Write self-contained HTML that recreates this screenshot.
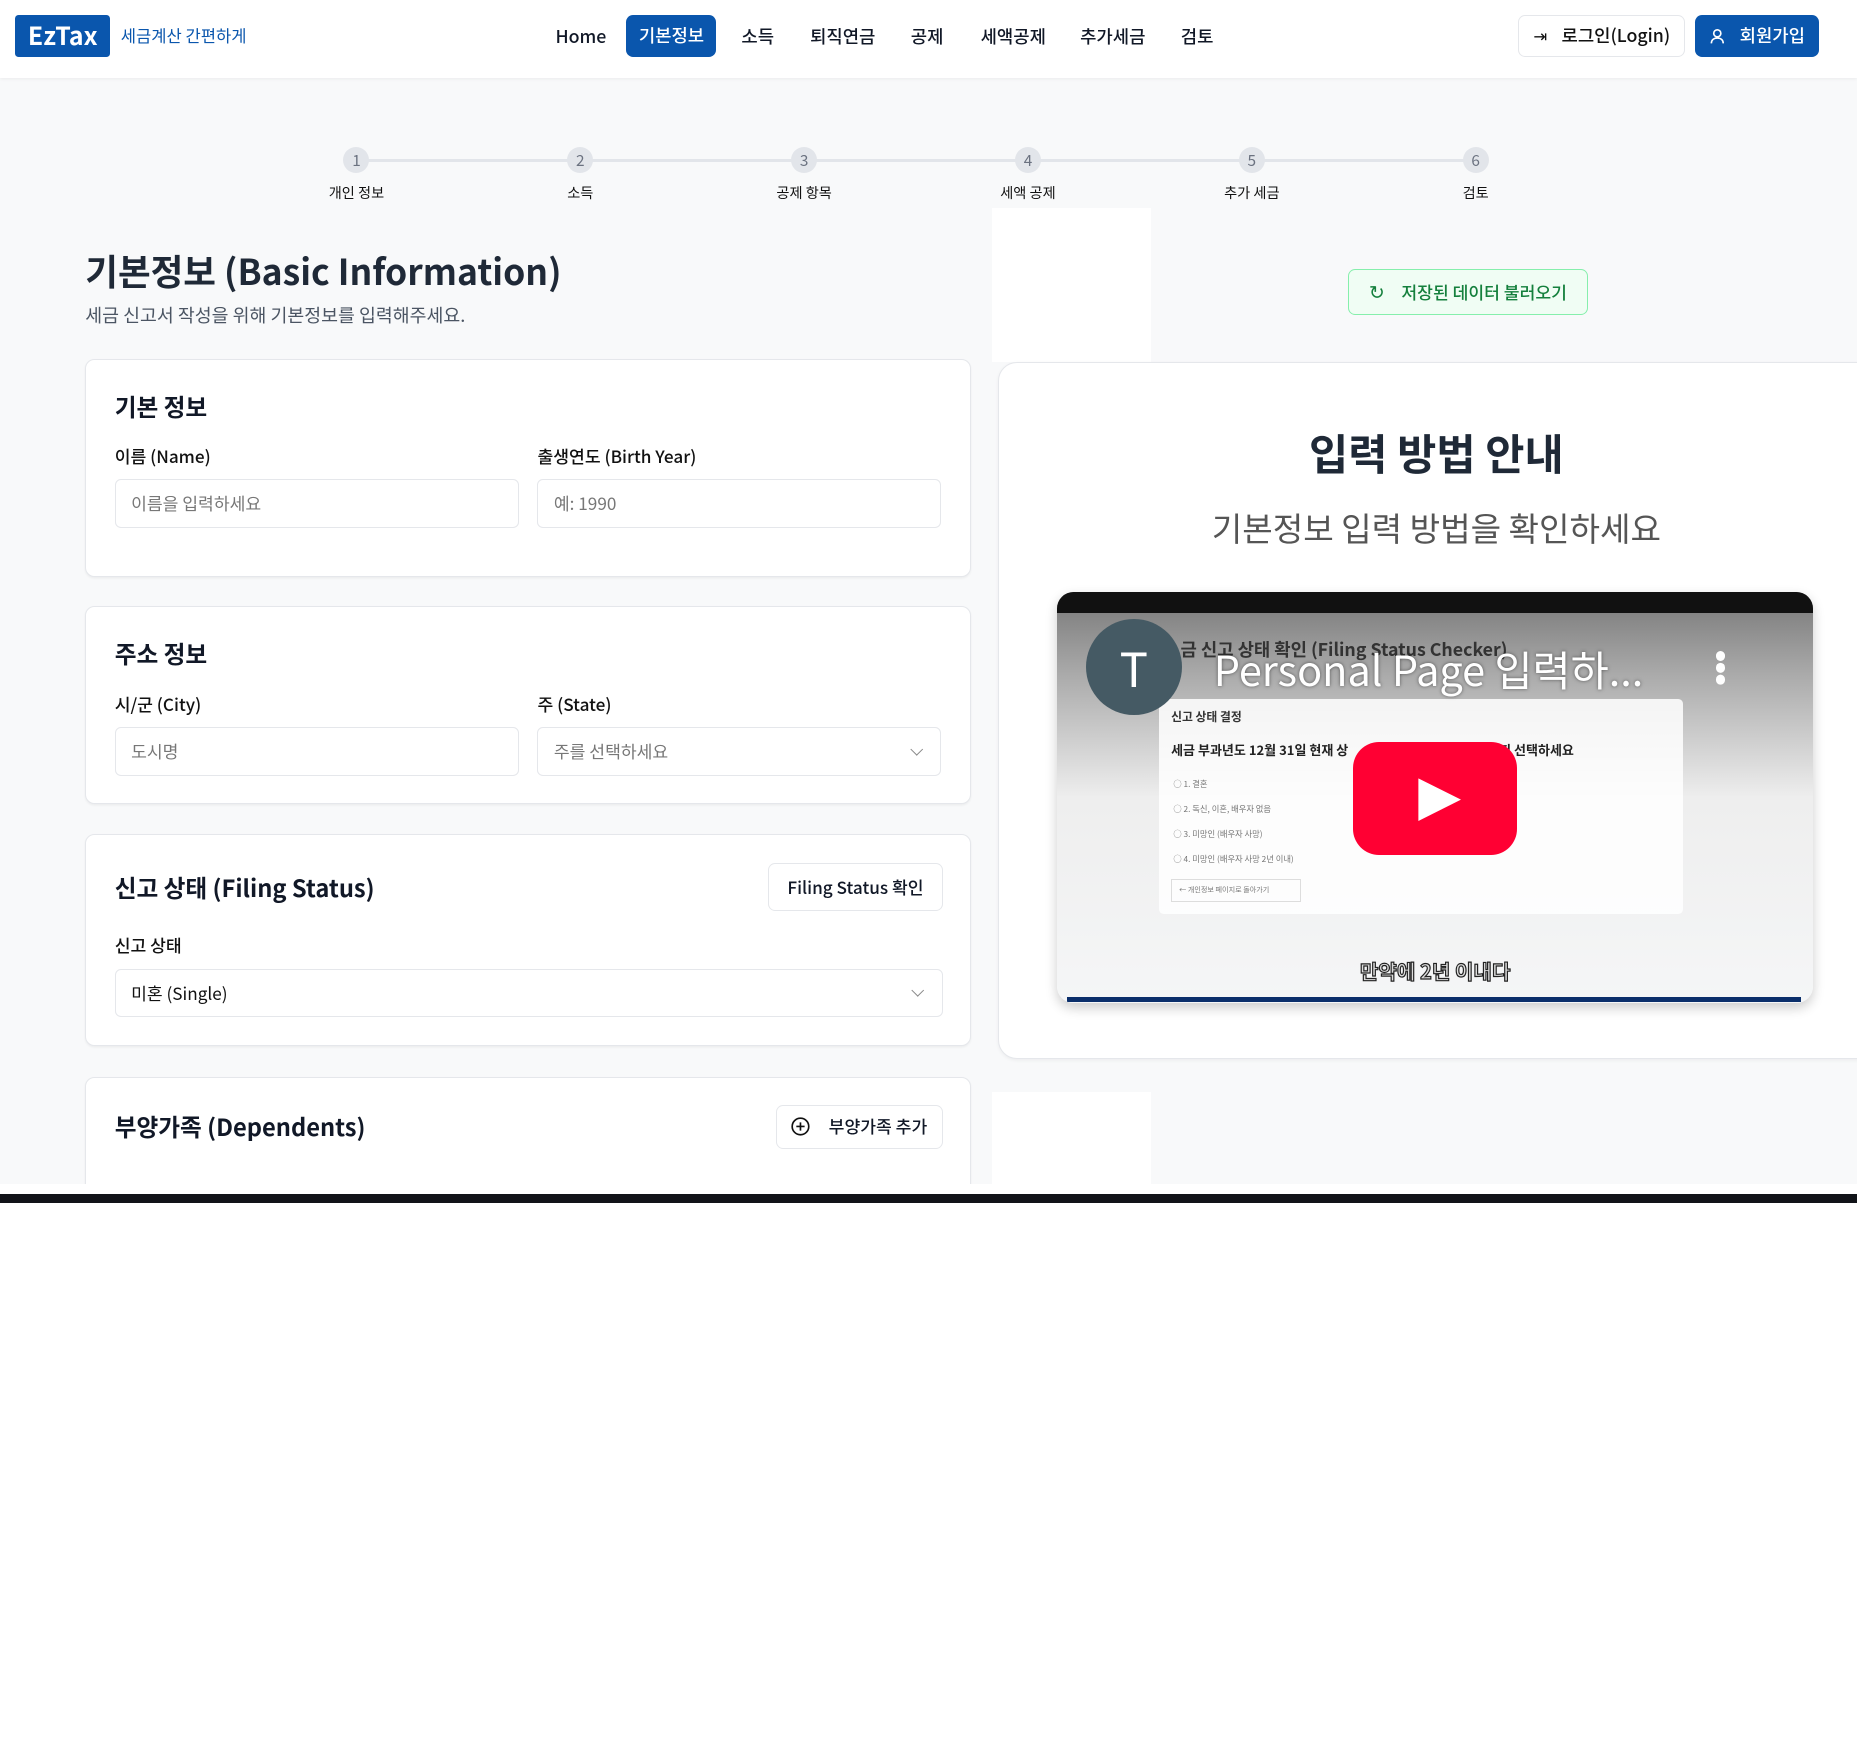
<!DOCTYPE html>
<html><head><meta charset="utf-8">
<style>
*{box-sizing:border-box;margin:0;padding:0}
html,body{width:1857px;height:1760px;overflow:hidden;background:#fff}
#w{zoom:1.18431;width:1568px;height:1486px;position:relative;font-family:"Noto Sans CJK KR","Liberation Sans",sans-serif;color:#111827;line-height:1.2}
.a{position:absolute}
.bg{left:0;top:0;width:1568px;height:1008px;background:#f8f9fa;overflow:hidden}
.hdr{left:0;top:0;width:1568px;height:66px;background:#fff;box-shadow:0 1px 3px rgba(0,0,0,.06)}
.nav{font-size:15px;font-weight:500;top:22px}
.btn{display:flex;align-items:center;justify-content:center;font-size:15px;font-weight:500;border-radius:6px}
.circ{width:22px;height:22px;border-radius:50%;background:#e2e5ea;color:#6b7280;font-size:13px;text-align:center;line-height:22px;top:124px}
.lbl{font-size:12px;top:156px;width:100px;text-align:center;color:#111}
.card{left:72px;width:748px;background:#fff;border:1px solid #e5e7eb;border-radius:8px;box-shadow:0 1px 2px rgba(0,0,0,.05)}
.h{font-size:20px;font-weight:700;left:24px}
.l{font-size:14.5px;font-weight:500;color:#111}
.in{height:41px;border:1px solid #e5e7eb;border-radius:5px;font-size:14.5px;color:#777;padding:0 13px;display:flex;align-items:center}
.chev{position:absolute;right:16px;top:14px;width:8px;height:8px;border-right:1.3px solid #888;border-bottom:1.3px solid #888;transform:rotate(45deg)}
</style></head><body><div id="w">
<div class="a bg">
 <div class="a" style="left:838px;top:176px;width:134px;height:130px;background:#fff"></div>
 <div class="a" style="left:838px;top:922px;width:134px;height:90px;background:#fff"></div>
 <div class="a hdr"></div>
 <div class="a" style="left:13px;top:13px;width:80px;height:35px;background:#0a56ad;border-radius:3px;color:#fff;font-weight:700;font-size:21px;text-align:center;line-height:35px">EzTax</div>
 <div class="a" style="left:102px;top:22px;font-size:14px;color:#0a56ad">세금계산 간편하게</div>
 <div class="a nav" style="left:469px">Home</div>
 <div class="a btn" style="left:529px;top:13px;width:76px;height:35px;background:#0a56ad;color:#fff">기본정보</div>
 <div class="a nav" style="left:626px">소득</div>
 <div class="a nav" style="left:684px">퇴직연금</div>
 <div class="a nav" style="left:769px">공제</div>
 <div class="a nav" style="left:828px">세액공제</div>
 <div class="a nav" style="left:912px">추가세금</div>
 <div class="a nav" style="left:997px">검토</div>
 <div class="a btn" style="left:1282px;top:13px;width:141px;height:35px;border:1px solid #e5e7eb;background:#fff;color:#111"><span style="margin-right:12px;font-size:14px">⇥</span>로그인(Login)</div>
 <div class="a btn" style="left:1431px;top:13px;width:105px;height:35px;background:#0a56ad;color:#fff"><svg width="14" height="14" viewBox="0 0 14 14" style="margin-right:12px" fill="none" stroke="#fff" stroke-width="1.4"><circle cx="7" cy="4.5" r="3"/><path d="M2 13c0-3 2.2-4.5 5-4.5s5 1.5 5 4.5"/></svg>회원가입</div>

 <div class="a" style="left:301px;top:134px;width:946px;height:3px;background:#e2e5ea"></div>
 <div class="a circ" style="left:290px">1</div><div class="a circ" style="left:479px">2</div><div class="a circ" style="left:668px">3</div><div class="a circ" style="left:857px">4</div><div class="a circ" style="left:1046px">5</div><div class="a circ" style="left:1235px">6</div>
 <div class="a lbl" style="left:251px">개인 정보</div><div class="a lbl" style="left:440px">소득</div><div class="a lbl" style="left:629px">공제 항목</div><div class="a lbl" style="left:818px">세액 공제</div><div class="a lbl" style="left:1007px">추가 세금</div><div class="a lbl" style="left:1196px">검토</div>

 <div class="a" style="left:72px;top:211px;font-size:30px;font-weight:700;color:#1f2937">기본정보 (Basic Information)</div>
 <div class="a" style="left:72px;top:257px;font-size:15.5px;color:#4b5563">세금 신고서 작성을 위해 기본정보를 입력해주세요.</div>
 <div class="a btn" style="left:1138px;top:227px;width:203px;height:39px;border:1px solid #86efac;background:#f0fdf4;color:#15803d;font-size:14.5px"><span style="margin-right:14px;font-size:16px">↻</span>저장된 데이터 불러오기</div>

 <div class="a card" style="top:303px;height:184px">
  <div class="a h" style="top:27px">기본 정보</div>
  <div class="a l" style="left:24px;top:73px">이름 (Name)</div>
  <div class="a l" style="left:381px;top:73px">출생연도 (Birth Year)</div>
  <div class="a in" style="left:24px;top:101px;width:341px">이름을 입력하세요</div>
  <div class="a in" style="left:381px;top:101px;width:341px">예: 1990</div>
 </div>
 <div class="a card" style="top:512px;height:167px">
  <div class="a h" style="top:27px">주소 정보</div>
  <div class="a l" style="left:24px;top:73px">시/군 (City)</div>
  <div class="a l" style="left:381px;top:73px">주 (State)</div>
  <div class="a in" style="left:24px;top:101px;width:341px">도시명</div>
  <div class="a in" style="left:381px;top:101px;width:341px">주를 선택하세요<span class="chev"></span></div>
 </div>
 <div class="a card" style="top:704px;height:179px">
  <div class="a h" style="top:32px">신고 상태 (Filing Status)</div>
  <div class="a btn" style="left:576px;top:24px;width:147px;height:40px;border:1px solid #e5e7eb;font-size:14.5px">Filing Status 확인</div>
  <div class="a l" style="left:24px;top:85px">신고 상태</div>
  <div class="a in" style="left:24px;top:113px;width:699px;color:#111">미혼 (Single)<span class="chev"></span></div>
 </div>
 <div class="a card" style="top:909px;height:120px">
  <div class="a h" style="top:29px">부양가족 (Dependents)</div>
  <div class="a btn" style="left:582px;top:23px;width:141px;height:37px;border:1px solid #e5e7eb;font-size:14.5px"><svg width="16" height="16" viewBox="0 0 16 16" style="margin-right:16px" fill="none" stroke="#111" stroke-width="1.4"><circle cx="8" cy="8" r="7"/><path d="M8 4.5v7M4.5 8h7"/></svg>부양가족 추가</div>
 </div>

 <div class="a" style="left:843px;top:306px;width:760px;height:588px;background:#fff;border:1px solid #e5e7eb;border-radius:16px;box-shadow:0 1px 3px rgba(0,0,0,.05)">
  <div class="a" style="left:0;top:54px;width:738px;text-align:center;font-size:36px;font-weight:700;color:#1f2937">입력 방법 안내</div>
  <div class="a" style="left:0;top:122px;width:738px;text-align:center;font-size:28px;color:#555">기본정보 입력 방법을 확인하세요</div>
  <div class="a" style="left:49px;top:193px;width:638px;height:347px;border-radius:14px;overflow:hidden;background:linear-gradient(#777 0%,#aaa 20%,#eee 50%,#f5f6f7 100%);box-shadow:0 4px 10px rgba(0,0,0,.2)">
   <div class="a" style="left:0;top:0;width:638px;height:18px;background:#111"></div>
   <div class="a" style="left:86px;top:90px;width:442px;height:182px;background:#fff;border-radius:4px;opacity:.85"></div>
   <div class="a" style="left:96px;top:100px;font-size:10px;font-weight:700;color:#333">신고 상태 결정</div>
   <div class="a" style="left:96px;top:127px;font-size:11px;font-weight:700;color:#222">세금 부과년도 12월 31일 현재 상 &nbsp; &nbsp; &nbsp; &nbsp; &nbsp; &nbsp; &nbsp; &nbsp; &nbsp; &nbsp; &nbsp; &nbsp; &nbsp; &nbsp; &nbsp; &nbsp; &nbsp; &nbsp; &nbsp; &nbsp; &nbsp; &nbsp; &nbsp; 인지 선택하세요</div>
   <div class="a" style="left:98px;top:152px;font-size:7px;color:#777;line-height:21px">○ 1. 결혼<br>○ 2. 독신, 이혼, 배우자 없음<br>○ 3. 미망인 (배우자 사망)<br>○ 4. 미망인 (배우자 사망 2년 이내)</div>
   <div class="a" style="left:96px;top:242px;width:110px;height:20px;border:1px solid #ddd;font-size:6px;color:#777;line-height:18px;padding-left:6px">← 개인정보 페이지로 돌아가기</div>
   <div class="a" style="left:104px;top:40px;font-size:15px;font-weight:700;color:#333">금 신고 상태 확인 (Filing Status Checker)</div>
   <div class="a" style="left:24px;top:23px;width:81px;height:81px;border-radius:50%;background:#455a64;color:#fff;font-size:40px;text-align:center;line-height:81px">T</div>
   <div class="a" style="left:132px;top:44px;font-size:35px;color:#fff;text-shadow:0 0 3px rgba(0,0,0,.5);white-space:nowrap">Personal Page 입력하...</div>
   <div class="a" style="left:556px;top:50px;width:8px;height:8px;border-radius:50%;background:#fff;box-shadow:0 10px 0 #fff,0 20px 0 #fff"></div>
   <div class="a" style="left:250px;top:127px;width:138px;height:95px;background:#ff0033;border-radius:22px"></div>
   <svg class="a" style="left:303px;top:155px" width="40" height="40" viewBox="0 0 40 40"><path d="M2 2L38 20L2 38Z" fill="#fff"/></svg>
   <div class="a" style="left:0;top:310px;width:638px;text-align:center;font-size:17px;font-weight:700;color:#ddd;-webkit-text-stroke:1px #222">만약에 2년 이내다</div>
   <div class="a" style="left:8px;top:342px;width:620px;height:4px;background:#0b2f6b"></div>
  </div>
 </div>
 <div class="a" style="left:0;top:1000px;width:1568px;height:8px;background:#fff"></div>
</div>
<div class="a" style="left:0;top:1008px;width:1568px;height:8px;background:#111318"></div>
</div></body></html>
